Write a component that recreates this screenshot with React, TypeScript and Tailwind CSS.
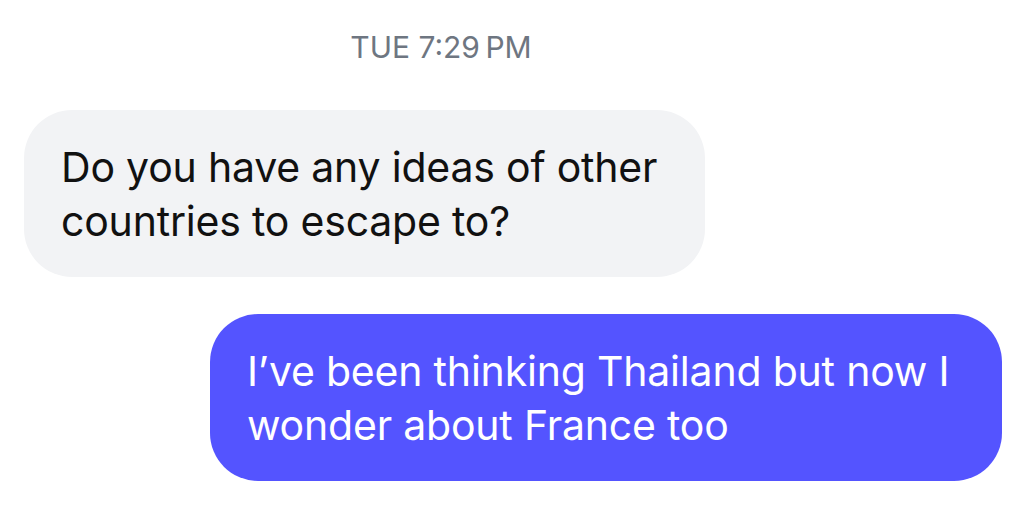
import React from 'react';

const Bubble: React.FC<{ mine?: boolean; children: React.ReactNode }> = ({ mine, children }) => (
  <div
    className={`rounded-[48px] pl-[37px] pr-[30px] pt-[30px] pb-[29px] text-[41px] leading-[54px] tracking-[-0.2px] ${
      mine ? 'self-end bg-[#5454ff] text-white' : 'self-start bg-[#f2f3f5] text-[#111]'
    }`}
  >
    {children}
  </div>
);

export default function App() {
  return (
    <div className="w-[1026px] h-[516px] bg-white font-['Inter','Liberation_Sans',sans-serif] flex flex-col px-6 pt-[30px]">
      <div className="text-center text-[30px] leading-[34px] text-[#6e7681] pr-[144px]">TUE 7:29&#8201;PM</div>
      <div className="flex flex-col mt-[46px] gap-[37px]">
        <div className="w-[681px] self-start">
          <Bubble>
            Do you have any ideas of other
            <br />
            countries to escape to?
          </Bubble>
        </div>
        <div className="w-[792px] self-end">
          <Bubble mine>
            I’ve been thinking Thailand but now I
            <br />
            wonder about France too
          </Bubble>
        </div>
      </div>
    </div>
  );
}
